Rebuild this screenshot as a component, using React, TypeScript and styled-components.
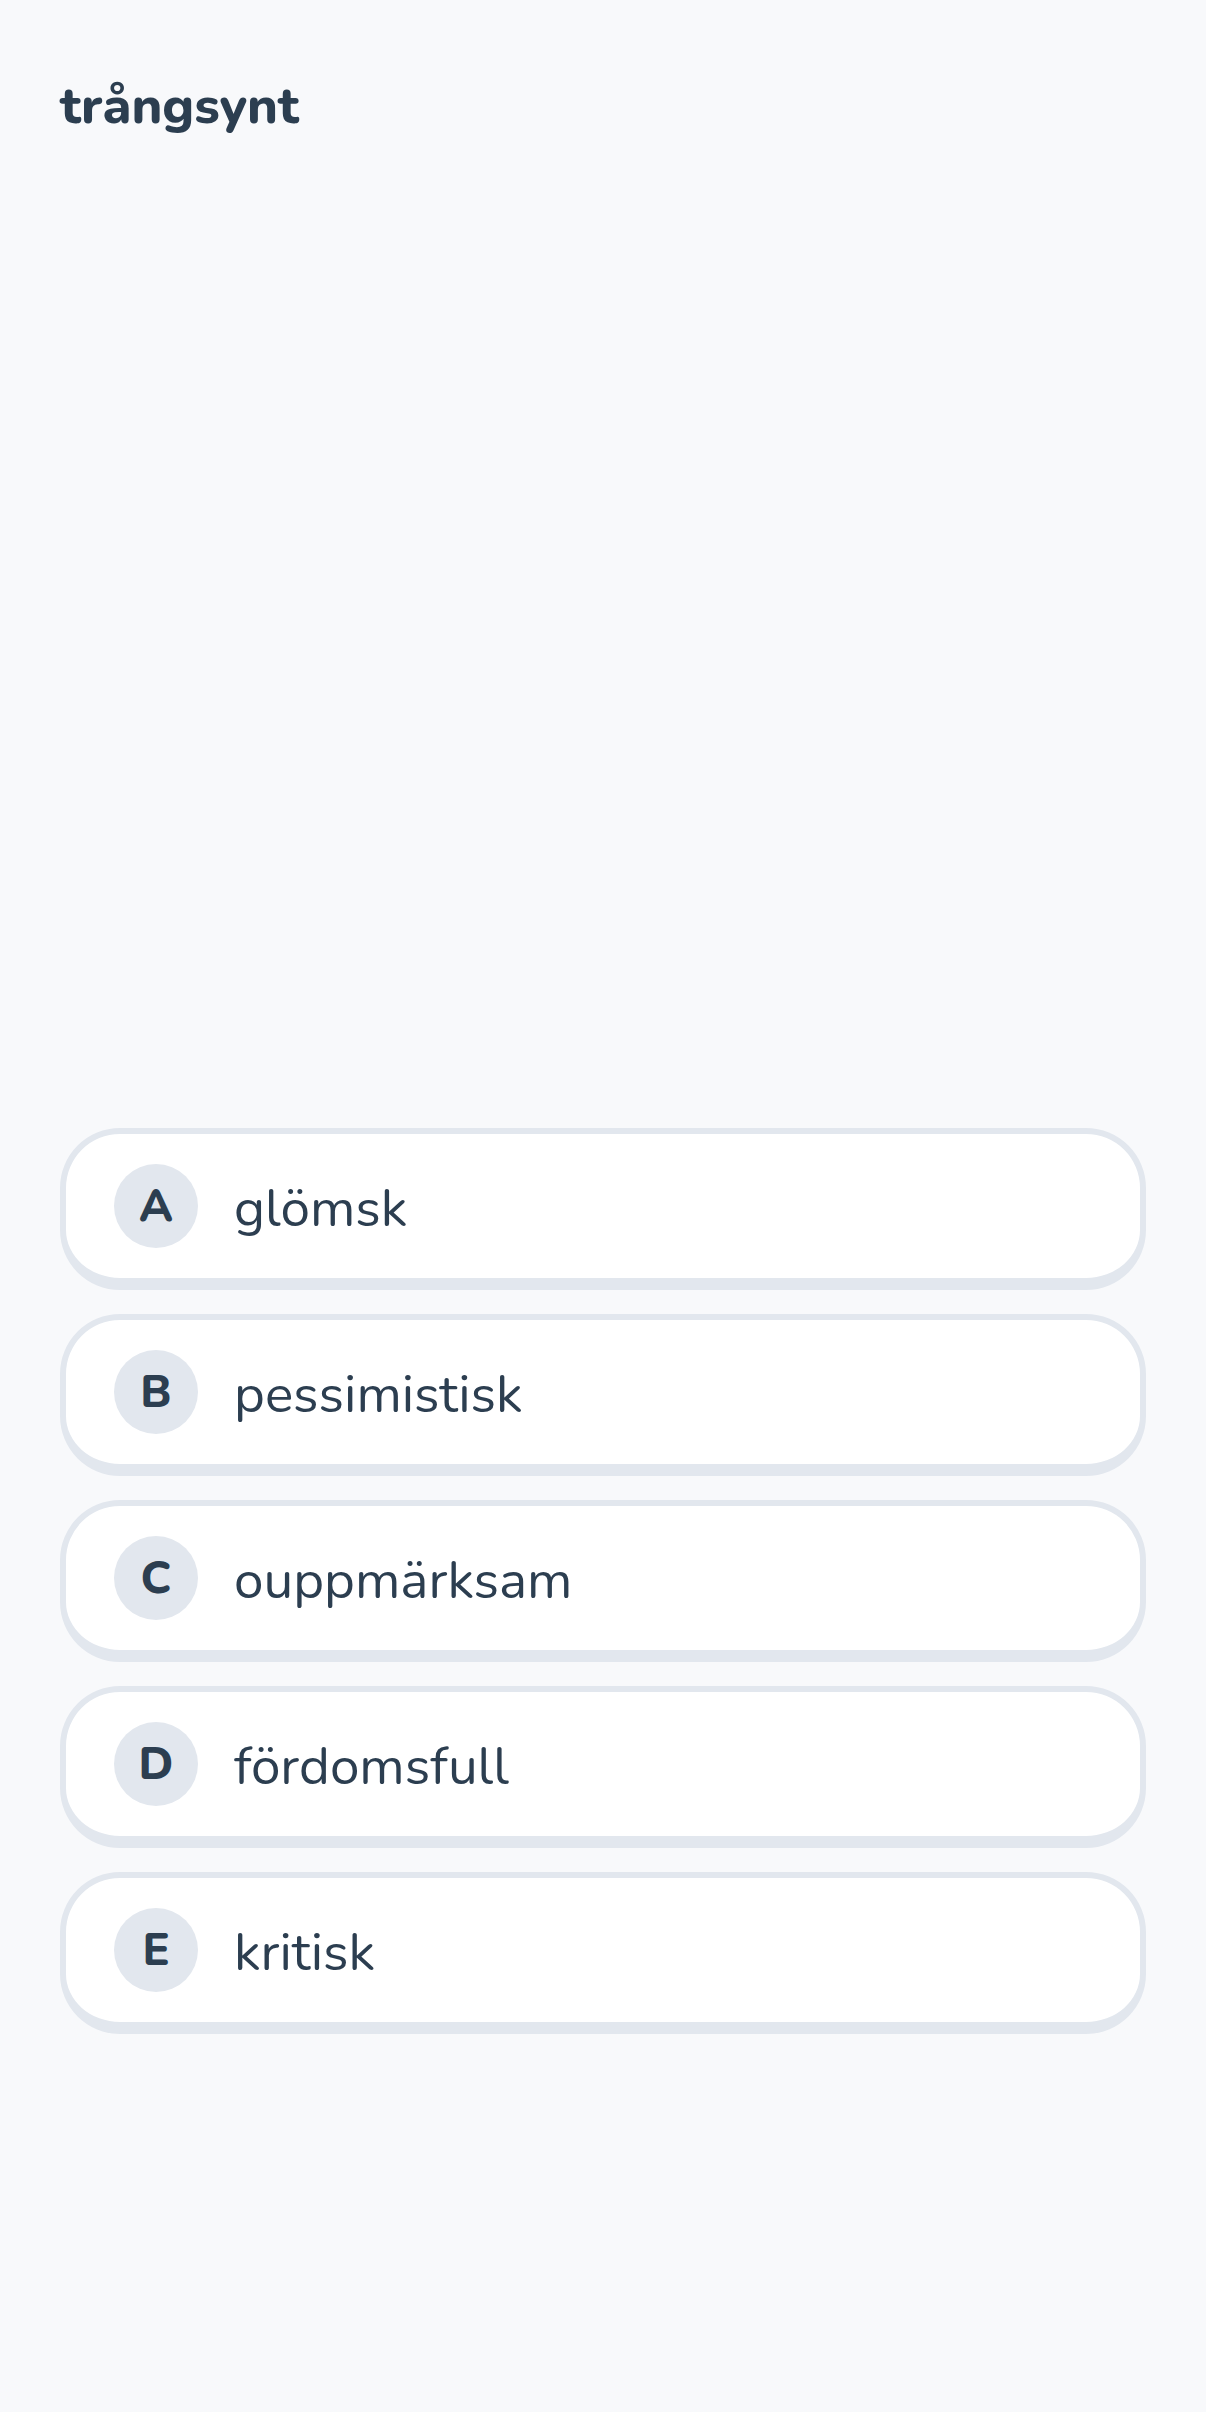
import styled, {createGlobalStyle} from 'styled-components'

const GlobalStyle = createGlobalStyle`
  html, body {
    margin: 0;
    padding: 0;
    background-color: #f8f9fb;
  }

  * {
    box-sizing: border-box;
  }
`

const Page = styled.div`
  display: flex;
  flex-direction: column;
  min-height: 100vh;
  padding: 60px 60px 378px 60px;
  font-family: 'Nunito', 'Lato', 'Noto Sans', sans-serif;
  color: #2c3e50;
`

const Title = styled.h1`
  margin: 0;
  padding-top: 10px;
  font-size: 52px;
  line-height: 72px;
  font-weight: 800;
  letter-spacing: 0;
`

const OptionList = styled.div`
  display: flex;
  flex-direction: column;
  gap: 24px;
  margin-top: auto;
`

const Option = styled.button`
  display: flex;
  align-items: center;
  gap: 36px;
  width: 100%;
  padding: 30px 48px;
  background-color: #ffffff;
  border: 6px solid #e2e7ee;
  border-bottom-width: 12px;
  border-radius: 60px;
  font-family: inherit;
  color: inherit;
  text-align: left;
  cursor: pointer;
`

const Letter = styled.span`
  display: flex;
  align-items: center;
  justify-content: center;
  flex-shrink: 0;
  width: 84px;
  height: 84px;
  border-radius: 50%;
  background-color: #e2e7ee;
  font-size: 45px;
  font-weight: 800;
`

const Label = styled.span`
  padding-top: 6px;
  font-size: 53px;
  line-height: 78px;
  font-weight: 400;
`

const options = [
  {letter: 'A', label: 'glömsk'},
  {letter: 'B', label: 'pessimistisk'},
  {letter: 'C', label: 'ouppmärksam'},
  {letter: 'D', label: 'fördomsfull'},
  {letter: 'E', label: 'kritisk'},
]

const App = () => {
  return (
    <>
      <GlobalStyle />
      <Page>
        <Title>trångsynt</Title>
        <OptionList>
          {options.map((option) => (
            <Option key={option.letter}>
              <Letter>{option.letter}</Letter>
              <Label>{option.label}</Label>
            </Option>
          ))}
        </OptionList>
      </Page>
    </>
  )
}

export default App
